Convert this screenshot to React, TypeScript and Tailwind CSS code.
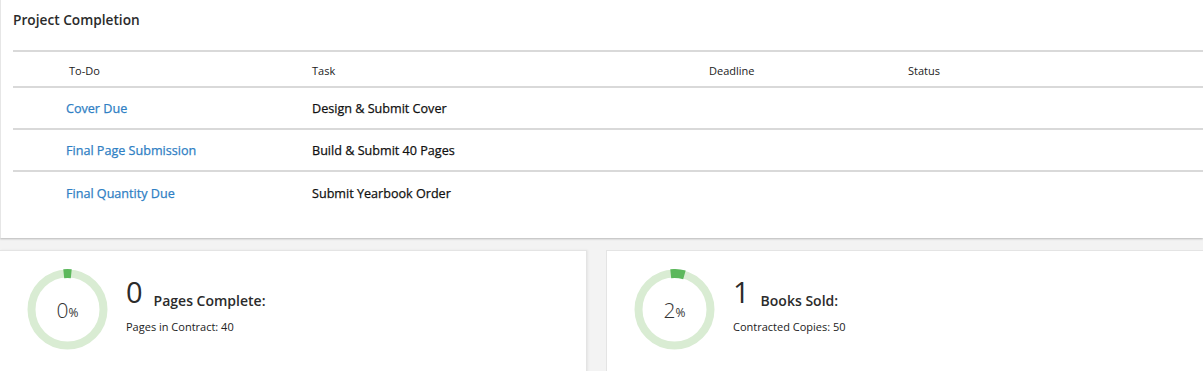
import React from "react";

const font = { fontFamily: '"Open Sans", "Noto Sans", Arial, sans-serif' };

function Ring({ pct }: { pct: number }) {
  const r = 36;
  const cx = 40;
  const cy = 40;
  const startDeg = -6;
  const endDeg = pct === 0 ? 6 : 16;
  const toXY = (deg: number, rad: number) => {
    const a = ((deg - 90) * Math.PI) / 180;
    return [cx + rad * Math.cos(a), cy + rad * Math.sin(a)];
  };
  const [x1, y1] = toXY(startDeg, r);
  const [x2, y2] = toXY(endDeg, r);
  return (
    <svg width="81" height="81" viewBox="-0.5 -0.5 81 81" className="shrink-0">
      <circle cx={cx} cy={cy} r={r} fill="none" stroke="#d9ecd3" strokeWidth="8" />
      <path
        d={`M ${x1} ${y1} A ${r} ${r} 0 0 1 ${x2} ${y2}`}
        fill="none"
        stroke="#5cb85c"
        strokeWidth="9"
      />
    </svg>
  );
}

function StatCard({
  pct,
  value,
  label,
  sub,
  className,
}: {
  pct: number;
  value: string;
  label: string;
  sub: string;
  className: string;
}) {
  return (
    <div className={className}>
      <div className="flex items-center">
        <div className="relative">
          <Ring pct={pct} />
          <div className="absolute inset-0 flex items-center justify-center pt-[2px] text-[#333]">
            <span className="text-[21px] font-light leading-none">{pct}</span>
            <span className="text-[12px] leading-none mt-[5px]">%</span>
          </div>
        </div>
        <div className="ml-[18px] -mt-[6px]">
          <div className="flex items-end text-[#2b2b2b]">
            <span className="text-[29px] leading-[30px] font-normal">{value}</span>
            <span className="ml-[11px] text-[14px] font-semibold leading-[18px] -mb-[3px]">
              {label}
            </span>
          </div>
          <div className="text-[11px] text-[#222] mt-[12px]">{sub}</div>
        </div>
      </div>
    </div>
  );
}

export default function App() {
  const rows = [
    ["Cover Due", "Design & Submit Cover"],
    ["Final Page Submission", "Build & Submit 40 Pages"],
    ["Final Quantity Due", "Submit Yearbook Order"],
  ];
  return (
    <div style={font} className="w-[1203px] h-[371px] overflow-hidden bg-[#f3f3f3]">
      <div className="bg-white border-l border-[#e6e6e6] shadow-[0_1px_2px_rgba(0,0,0,0.25)] h-[238px]">
        <div className="pl-[12px] pt-[10px] h-[50px] text-[13.7px] font-semibold text-[#2b2b2b]">
          Project Completion
        </div>
        <div className="ml-[12px]">
          <div className="grid grid-cols-[299px_397px_199px_1fr] h-[38px] items-center pt-[4px] border-y-2 border-[#d9d9d9] text-[11px] text-[#222]">
            <div className="pl-[56px]">To-Do</div>
            <div>Task</div>
            <div>Deadline</div>
            <div>Status</div>
          </div>
          {rows.map(([todo, task], i) => (
            <div
              key={todo}
              className={`grid grid-cols-[299px_397px_199px_1fr] items-center pt-[3px] text-[12.6px] ${
                i < 2 ? "h-[42px] border-b-2 border-[#d9d9d9]" : "h-[42px]"
              }`}
            >
              <div className="pl-[53px] text-[#2f80c4] [-webkit-text-stroke:0.25px_#2f80c4]">
                {todo}
              </div>
              <div className="text-[#111] [-webkit-text-stroke:0.25px_#111]">{task}</div>
              <div></div>
              <div></div>
            </div>
          ))}
        </div>
      </div>
      <div className="flex mt-[12px] gap-[19px]">
        <StatCard
          pct={0}
          value="0"
          label="Pages Complete:"
          sub="Pages in Contract: 40"
          className="w-[587px] h-[130px] bg-white border-r border-t border-[#e4e4e4] shadow-[1px_0_2px_rgba(0,0,0,0.06)] pl-[27px] pt-[18px]"
        />
        <StatCard
          pct={2}
          value="1"
          label="Books Sold:"
          sub="Contracted Copies: 50"
          className="flex-1 h-[130px] bg-white border-l border-t border-[#e4e4e4] pl-[27px] pt-[18px]"
        />
      </div>
    </div>
  );
}
